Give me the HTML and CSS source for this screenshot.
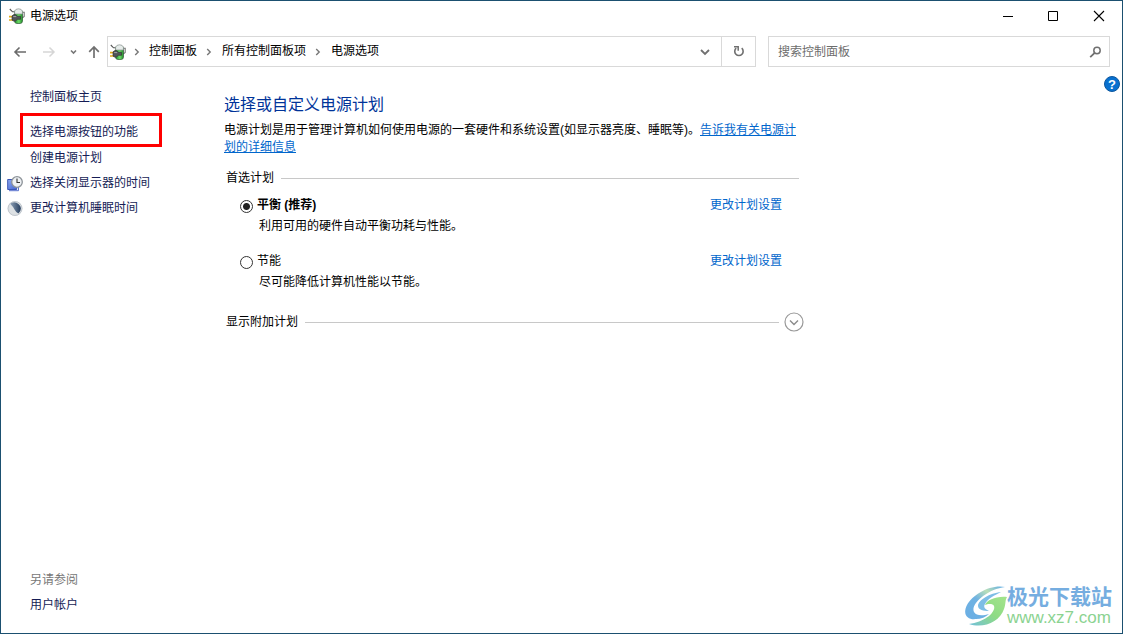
FILE: index.html
```html
<!DOCTYPE html>
<html lang="zh-CN">
<head>
<meta charset="utf-8">
<title>电源选项</title>
<meta name="viewport" content="width=device-width, initial-scale=1">
<link rel="stylesheet" href="styles.css">
</head>
<body>
<svg class="defs" width="0" height="0" aria-hidden="true">
  <defs>
    <linearGradient id="green" x1="0" x2="1"><stop offset="0" stop-color="#1d8d2a"/><stop offset=".55" stop-color="#6fdc68"/><stop offset="1" stop-color="#1f8a2a"/></linearGradient>
    <linearGradient id="screen" x1="0" x2="1" y2="1"><stop offset="0" stop-color="#8ea9f0"/><stop offset="1" stop-color="#3f63d2"/></linearGradient>
    <linearGradient id="moon" x1="0" x2="1"><stop offset="0" stop-color="#8fa2b8"/><stop offset="1" stop-color="#243c5c"/></linearGradient>
    <linearGradient id="outer" x1="1" x2="0" y1="0" y2="1"><stop offset="0" stop-color="#5aa9ea"/><stop offset=".3" stop-color="#b9dfb8"/><stop offset=".55" stop-color="#6fb2e2"/><stop offset="1" stop-color="#6aaee4"/></linearGradient>
    <linearGradient id="inner" x1="0" x2="1" y1="1" y2="0"><stop offset="0" stop-color="#72c0dc"/><stop offset=".5" stop-color="#8edb84"/><stop offset="1" stop-color="#a4e48c"/></linearGradient>
    <symbol id="power" viewBox="0 0 16 16">
      <path d="M.8 1 3.500 3.800H6" fill="none" stroke="#555" stroke-width="1.100"/>
      <path d="M13 4.200h2.200v4.300l-2 1.500" fill="none" stroke="#777" stroke-width="1.100"/>
      <rect x="5.500" y="2" width="8" height="13.500" rx="2.400" fill="url(#green)" stroke="#2f5a35" stroke-width=".7"/>
      <path d="M5.600 6V3Q6.500.8 9.500.8T13.400 3v3z" fill="#e6ecea" stroke="#8b9290" stroke-width=".7"/>
      <path d="M0 8.600h4M0 12h4" stroke="#e0ac18" stroke-width="1.700"/>
      <path d="M3 8q1-1.700 3.500-1.300L8.500 8.300h3v3h-3L6.500 13Q4 13.500 3 12z" fill="#515457" stroke="#2c2c2c" stroke-width=".6"/>
      <path d="M4.200 8.600h3" stroke="#a2a5a8"/>
    </symbol>
    <symbol id="crumb" viewBox="0 0 6 8"><path d="m1.200 1 3 3-3 3" fill="none" stroke="#777" stroke-width="1.400"/></symbol>
  </defs>
</svg>
<div class="window">
  <header class="titlebar">
    <svg class="app-icon"><use href="#power"/></svg>
    <span class="title">电源选项</span>
    <div class="caption">
      <button type="button" aria-label="最小化"><svg width="12" height="12"><path d="M2 6.500h10" stroke="#000"/></svg></button>
      <button type="button" aria-label="最大化"><svg width="12" height="12"><path d="M1.500 1.500h9v9h-9z" fill="none" stroke="#000"/></svg></button>
      <button type="button" aria-label="关闭"><svg width="12" height="12"><path d="m1 1 10 10M11 1 1 11" stroke="#000" stroke-width="1.100"/></svg></button>
    </div>
  </header>
  <div class="toolbar">
    <nav class="history" aria-label="导航">
      <button type="button" aria-label="后退"><svg width="14" height="12"><path d="M13 6H2M6.500 1.500 2 6l4.500 4.500" fill="none" stroke="#6b6b6b" stroke-width="1.600"/></svg></button>
      <button type="button" aria-label="前进" disabled><svg width="14" height="12"><path d="M1 6h11M7.500 1.500 12 6l-4.500 4.500" fill="none" stroke="#d6d6d6" stroke-width="1.500"/></svg></button>
      <button type="button" class="recent" aria-label="最近位置"><svg width="8" height="6"><path d="m1 1.500 2.500 2.500L6 1.500" fill="none" stroke="#777" stroke-width="1.600"/></svg></button>
      <button type="button" aria-label="上移"><svg width="12" height="14"><path d="M6 13V2M1.200 6.800 6 2l4.800 4.800" fill="none" stroke="#707070" stroke-width="1.700"/></svg></button>
    </nav>
    <div class="address">
      <svg class="app-icon"><use href="#power"/></svg>
      <svg class="crumb"><use href="#crumb"/></svg>
      <a href="#">控制面板</a>
      <svg class="crumb"><use href="#crumb"/></svg>
      <a href="#">所有控制面板项</a>
      <svg class="crumb"><use href="#crumb"/></svg>
      <a href="#">电源选项</a>
      <button type="button" class="drop" aria-label="展开"><svg width="10" height="8"><path d="m1 2 4 4 4-4" fill="none" stroke="#707070" stroke-width="1.800"/></svg></button>
      <button type="button" class="refresh" aria-label="刷新"><svg width="12" height="13"><path d="M8.700 3.200A4.200 4.200 0 1 1 3.200 3.200" fill="none" stroke="#707070" stroke-width="1.600"/><path d="M1 1.700h4.200v4" fill="none" stroke="#707070" stroke-width="1.500"/></svg></button>
    </div>
    <form class="search">
      <input type="text" placeholder="搜索控制面板" aria-label="搜索控制面板">
      <button type="button" aria-label="搜索"><svg width="13" height="12"><circle cx="8" cy="4.500" r="3.200" fill="none" stroke="#707070" stroke-width="1.500"/><path d="M5.700 6.800 1.200 11.200" stroke="#707070" stroke-width="1.800"/></svg></button>
    </form>
  </div>
  <div class="body">
    <aside class="sidebar">
      <a href="#">控制面板主页</a>
      <a class="marked" href="#">选择电源按钮的功能</a>
      <a href="#">创建电源计划</a>
      <a class="task" href="#"><svg class="task-icon" viewBox="0 0 16 16"><path d="M.7 3.500h9v10h-9z" fill="url(#screen)" stroke="#3a55b5"/><path d="M2 14.700h9.500V11" fill="none" stroke="#5871ce"/><circle cx="10" cy="6" r="5.300" fill="#eef1f4" stroke="#8c9298" stroke-width="1.300"/><path d="M10 2.500V6.500h3" fill="none" stroke="#333" stroke-width="1.100"/></svg>选择关闭显示器的时间</a>
      <a class="task" href="#"><svg class="task-icon" viewBox="0 0 16 16"><circle cx="8" cy="7.500" r="7.300" fill="#dde1e4"/><path d="M3 2.500Q8-.5 12 3.500T11.500 12.500Q9 11.500 7.500 8.500T3 2.500z" fill="url(#moon)"/><circle cx="8" cy="7.500" r="7" fill="none" stroke="#bcc3c9" stroke-width=".9"/></svg>更改计算机睡眠时间</a>
      <div class="see-also">
        <span>另请参阅</span>
        <a href="#">用户帐户</a>
      </div>
    </aside>
    <main class="main">
      <h1>选择或自定义电源计划</h1>
      <p class="intro">电源计划是用于管理计算机如何使用电源的一套硬件和系统设置(如显示器亮度、睡眠等)。<a href="#">告诉我有关电源计划的详细信息</a></p>
      <section class="plans">
        <h2 class="rule">首选计划</h2>
        <div class="plan">
          <input type="radio" name="plan" id="balanced" checked>
          <label for="balanced"><b>平衡 (推荐)</b></label>
          <a href="#">更改计划设置</a>
          <p>利用可用的硬件自动平衡功耗与性能。</p>
        </div>
        <div class="plan">
          <input type="radio" name="plan" id="saver">
          <label for="saver">节能</label>
          <a href="#">更改计划设置</a>
          <p>尽可能降低计算机性能以节能。</p>
        </div>
      </section>
      <div class="more">
        <h2 class="rule">显示附加计划</h2>
        <button type="button" aria-label="显示附加计划"><svg width="20" height="20"><circle cx="10" cy="10" r="9" fill="none" stroke="#999" stroke-width="1.200"/><path d="m6 8.500 4 4 4-4" fill="none" stroke="#8b8b8b" stroke-width="1.400"/></svg></button>
      </div>
    </main>
    <button type="button" class="help" aria-label="帮助">?</button>
  </div>
  <div class="watermark">
    <svg width="42" height="42" viewBox="0 0 42 42">
      <path d="M40 2C26-1 8 9 2 20c-5 10 1 15 9 14 5 0 10-2 13-5-6 2-13 2-15-2C5 19 23 4 40 2z" fill="url(#outer)"/>
      <path d="M36 7C25 8 13 15 13 21c0 4 6 5 11 5-4-2-6-4-4-7 2-5 10-9 16-12z" fill="#7dbde6"/>
      <path d="M42 12C31 11 22 15 20 20c2-1 8-2 9 1 2 6-9 16-25 18 14 5 31-2 35-15 2-5 1-9 3-12z" fill="url(#inner)"/>
    </svg>
    <div class="brand"><strong>极光下载站</strong><span>www.xz7.com</span></div>
  </div>
</div>
</body>
</html>
```
FILE: styles.css
```css
* { box-sizing: border-box; }
body {
  margin: 0;
  font: 12px/17px "Liberation Sans", "Noto Sans CJK SC", sans-serif;
  color: #000;
  background: #fff;
}
.defs { position: absolute; }
h1, h2, p { margin: 0; font-weight: 400; }
a { text-decoration: none; color: #0066cc; }
button { border: 0; padding: 0; background: none; font: inherit; display: flex; align-items: center; justify-content: center; }
svg { display: block; flex: none; }

.window {
  position: relative;
  display: flex;
  flex-direction: column;
  min-height: 100vh;
  border: 1px solid #1b5070;
}
.app-icon { width: 16px; height: 16px; }

.titlebar { display: flex; align-items: center; height: 29px; padding-left: 8px; gap: 5px; }
.title { padding-top: 2px; }
.caption { display: flex; margin-left: auto; }
.caption button { width: 46px; height: 28px; }

.toolbar { display: flex; padding: 6px 12px 0 8px; height: 37px; }
.history { display: flex; width: 98px; }
.history button { width: 22px; height: 31px; }
.history button:nth-child(2) { width: 36px; }
.history .recent { width: 14px; }
.history button:last-child { width: 26px; }
.address { display: flex; flex: 649; align-items: center; border: 1px solid #d9d9d9; padding-left: 2px; }
.address a { color: #000; }
.crumb { width: 6px; height: 8px; margin: 0 10px 0 9px; }
.address .app-icon + .crumb { margin-left: 8px; margin-right: 9px; }
.drop { width: 32px; height: 29px; margin-left: auto; }
.refresh { width: 34px; height: 29px; border-left: 1px solid #d9d9d9; }
.search { display: flex; flex: 342; margin-left: 12px; border: 1px solid #d9d9d9; }
.search input { flex: 1; min-width: 0; border: 0; padding: 2px 9px 0; font: inherit; outline: 0; background: none; }
.search input::placeholder { color: #6d6d6d; opacity: 1; }
.search button { width: 28px; }

.body { display: flex; flex: 1; padding-top: 8px; }
.sidebar { display: flex; flex-direction: column; align-items: flex-start; width: 223px; padding: 14px 0 19px 6px; gap: 8px; }
.sidebar a { color: #151c55; }
.sidebar > a { margin-left: 23px; }
.sidebar > .marked { margin: -1px 0 -5px 13px; padding: 8px 21px 3px 7px; border: 3px solid #ff0000; }
.sidebar > .task { display: flex; align-items: center; gap: 7px; margin-left: 0; }
.task-icon { width: 16px; height: 16px; }
.see-also { display: flex; flex-direction: column; gap: 8px; margin: auto 0 0 23px; color: #777; }

.main { flex: 1; max-width: 580px; padding-top: 18px; }
h1 { font-size: 16px; line-height: 24px; color: #003399; }
.intro { margin-top: 5px; padding-right: 4px; }
.intro a { text-decoration: underline; }
h2 { font-size: 12px; line-height: 17px; }
.rule { display: flex; flex: 1; align-items: center; gap: 7px; }
.rule::after { content: ""; flex: 1; height: 1px; background: #c8c8c8; }
.plans { margin-top: 14px; padding: 0 5px 0 2px; }
.plan {
  display: grid;
  grid-template-columns: 13px 1fr auto;
  column-gap: 4px;
  row-gap: 4px;
  align-items: center;
  padding: 10px 17px 0 14px;
}
.plan + .plan { padding-top: 18px; }
.plan p { grid-column: 2 / 4; padding-left: 2px; }
.plan input {
  appearance: none;
  width: 13px;
  height: 13px;
  margin: 1px 0 0;
  border: 1px solid #333;
  border-radius: 50%;
}
.plan input:checked { background: radial-gradient(circle, #222 0 3px, transparent 4px); }
.more { display: flex; align-items: center; gap: 5px; margin-top: 21px; padding-left: 2px; }

.help {
  width: 16px;
  height: 16px;
  margin: 1px 2px 0 auto;
  border: 1px solid #0d579e;
  border-radius: 50%;
  background: #0870cf;
  color: #fff;
  font-size: 13px;
  font-weight: 700;
}
.watermark { position: absolute; right: 10px; bottom: 6px; display: flex; align-items: center; }
.brand { display: flex; flex-direction: column; }
.brand strong { color: #75ade0; font-size: 21px; line-height: 24px; }
.brand span { color: #8bd391; font-size: 17px; line-height: 18px; }
```
